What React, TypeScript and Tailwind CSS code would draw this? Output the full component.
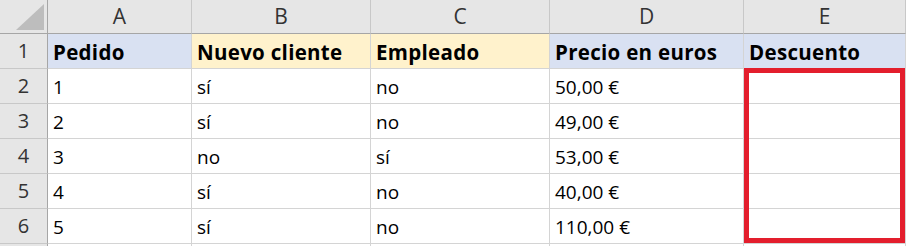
import React from "react";

const cols = ["A", "B", "C", "D", "E"];

const header = [
  { text: "Pedido", bg: "bg-[#d9e1f2]" },
  { text: "Nuevo cliente", bg: "bg-[#fff2cc]" },
  { text: "Empleado", bg: "bg-[#fff2cc]" },
  { text: "Precio en euros", bg: "bg-[#d9e1f2]" },
  { text: "Descuento", bg: "bg-[#d9e1f2]" },
];

const rows = [
  ["1", "sí", "no", "50,00 €", ""],
  ["2", "sí", "no", "49,00 €", ""],
  ["3", "no", "sí", "53,00 €", ""],
  ["4", "sí", "no", "40,00 €", ""],
  ["5", "sí", "no", "110,00 €", ""],
];

const font = { fontFamily: '"Open Sans", "Noto Sans", sans-serif' };

export default function App() {
  return (
    <div className="w-[908px] h-[246px] overflow-hidden bg-white" style={font}>
      <div className="relative grid grid-cols-[48px_144px_179px_179px_194px_162px] grid-rows-[34px_35px_35px_35px_35px_35px_35px_35px] w-[906px]">
        {/* corner */}
        <div className="bg-[#e6e6e6] border-r border-b border-[#a6a6a6] flex items-end justify-end pr-[3px] pb-[3px]">
          <svg width="28" height="26" viewBox="0 0 28 26">
            <polygon points="28,0 28,26 0,26" fill="#bdbdbd" />
          </svg>
        </div>
        {cols.map((c) => (
          <div
            key={c}
            className="bg-[#e6e6e6] border-r border-[#c8c8c8] border-b border-b-[#a6a6a6] flex items-center justify-center text-[21px] text-[#333]"
          >
            {c}
          </div>
        ))}

        {/* row 1 */}
        <div className="bg-[#e6e6e6] border-r border-r-[#a6a6a6] border-b border-[#c8c8c8] flex items-center justify-center text-[20px] text-[#333]">
          1
        </div>
        {header.map((h) => (
          <div
            key={h.text}
            className={`${h.bg} border-r border-b border-[#d4d4d4] flex items-end pl-[5px] pb-[6px] font-bold text-[20.5px] tracking-[0.3px] text-black leading-none`}
          >
            {h.text}
          </div>
        ))}

        {rows.map((r, i) => (
          <React.Fragment key={i}>
            <div className="bg-[#e6e6e6] border-r border-r-[#a6a6a6] border-b border-[#c8c8c8] flex items-center justify-center text-[20px] text-[#333]">
              {i + 2}
            </div>
            {r.map((v, j) => (
              <div
                key={j}
                className="border-r border-b border-[#d4d4d4] flex items-end pl-[5px] pb-[6px] text-[19px] text-black leading-none"
              >
                {v}
              </div>
            ))}
          </React.Fragment>
        ))}

        {/* partial row 7 */}
        <div className="bg-[#e6e6e6] border-r border-r-[#a6a6a6]" />
        {cols.map((c) => (
          <div key={c} className="border-r border-[#d4d4d4]" />
        ))}

        {/* highlight around E2:E6 */}
        <div className="absolute left-[744px] top-[68px] w-[161px] h-[175px] border-[5px] border-[#e31e2d] pointer-events-none" />
      </div>
    </div>
  );
}
